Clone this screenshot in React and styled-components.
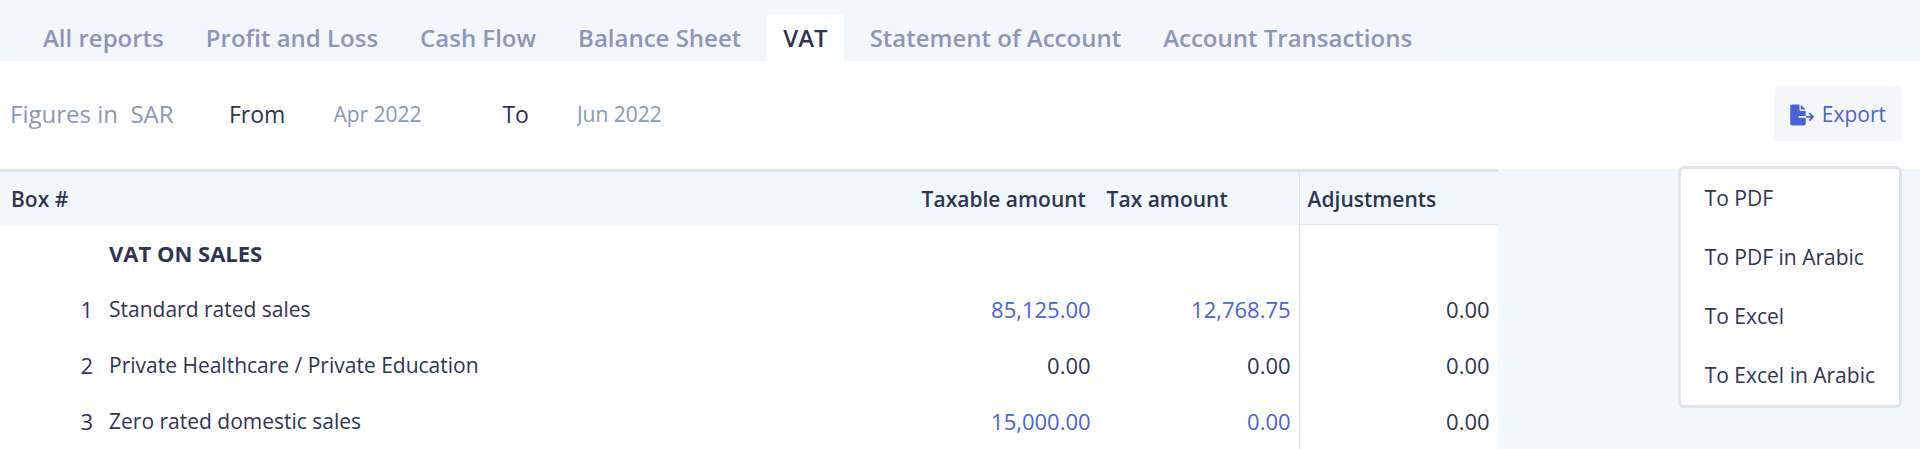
import React from 'react';
import styled, { createGlobalStyle } from 'styled-components';

const GlobalStyle = createGlobalStyle`
  :root {
    --text-color: #2f3453;
    --muted-color: #8a97b8;
    --link-color: #4a62d8;
    --page-color: #f1f8fb;
    --tab-color: #f3f6fa;
    --border-color: #dce5e9;
  }
  * {
    box-sizing: border-box;
  }
  body {
    margin: 0;
    background-color: var(--page-color);
    color: var(--text-color);
    font-family: 'Open Sans', 'Noto Sans', sans-serif;
    font-size: 21px;
    line-height: 28px;
  }
`;

// tabs
const TabNav = styled.nav`
  display: flex;
  gap: 10px;
  padding: 14px 27px 0;
`;

const Tab = styled.a`
  padding: 10px 16px 9px;
  border-radius: 4px 4px 0 0;
  background-color: ${({ $active }) => ($active ? '#ffffff' : 'var(--tab-color)')};
  color: ${({ $active }) => ($active ? 'var(--text-color)' : 'var(--muted-color)')};
  font-size: 24px;
  font-weight: 600;
  line-height: 28px;
  text-decoration: none;
  white-space: nowrap;
`;

// toolbar
const Toolbar = styled.section`
  display: flex;
  justify-content: space-between;
  align-items: center;
  padding: 25px 18px 28px 10px;
  background-color: #ffffff;
`;

const Filters = styled.div`
  display: flex;
  align-items: center;
`;

const Figures = styled.span`
  width: 219px;
  color: var(--muted-color);
  font-size: 24px;
  white-space: pre;
`;

const Period = styled.label`
  display: flex;
  align-items: center;
  gap: 48px;
  font-size: 23px;
`;

const PeriodInput = styled.input`
  width: 169px;
  padding: 0;
  border: none;
  background: transparent;
  color: var(--muted-color);
  font-family: inherit;
  font-size: 21px;
  line-height: 28px;
`;

const ExportWrap = styled.div`
  position: relative;
`;

const ExportButton = styled.button`
  display: flex;
  align-items: center;
  gap: 8px;
  padding: 15px 16px 13px;
  border: none;
  border-radius: 5px;
  background-color: #f4f6fa;
  color: var(--link-color);
  font-family: inherit;
  font-size: 21px;
  line-height: 27px;
  cursor: pointer;
`;

const Menu = styled.ul`
  position: absolute;
  top: calc(100% + 25px);
  right: 0;
  margin: 0;
  padding: 0;
  border: 3px solid #dfe3ea;
  border-radius: 6px;
  background-color: #ffffff;
  list-style: none;
  z-index: 10;
`;

const MenuItem = styled.button`
  display: block;
  width: 100%;
  padding: 15px 24px 16px;
  border: none;
  background: transparent;
  color: var(--text-color);
  font-family: inherit;
  font-size: 21px;
  line-height: 28px;
  text-align: left;
  white-space: nowrap;
  cursor: pointer;
`;

// table
const Table = styled.table`
  width: 78%;
  border-spacing: 0;
  table-layout: fixed;
  background-color: #ffffff;
`;

const Col = styled.col`
  width: ${({ $width }) => $width};
`;

const HeadCell = styled.th`
  padding: 13px 8px 11px;
  border-top: 3px solid var(--border-color);
  border-left: ${({ $last }) => ($last ? '1px solid var(--border-color)' : 'none')};
  border-bottom: 1px solid ${({ $last }) => ($last ? 'var(--border-color)' : 'transparent')};
  background-color: var(--page-color);
  font-weight: 600;
  text-align: left;
  white-space: nowrap;
  &:first-child {
    padding-left: 11px;
  }
`;

const Cell = styled.td`
  height: 56px;
  padding: 0 8px;
  border-left: ${({ $last }) => ($last ? '1px solid var(--border-color)' : 'none')};
  font-size: ${({ $number }) => ($number ? '22px' : '21px')};
  text-align: ${({ $number }) => ($number ? 'right' : 'left')};
  white-space: nowrap;
`;

const SectionCell = styled(Cell)`
  font-size: 22px;
  font-weight: 700;
`;

const Amount = styled.a`
  color: var(--link-color);
  text-decoration: none;
`;

const tabs = [
  'All reports',
  'Profit and Loss',
  'Cash Flow',
  'Balance Sheet',
  'VAT',
  'Statement of Account',
  'Account Transactions',
];

const exportOptions = ['To PDF', 'To PDF in Arabic', 'To Excel', 'To Excel in Arabic'];

const rows = [
  { box: 1, name: 'Standard rated sales', taxable: '85,125.00', tax: '12,768.75', linked: true },
  { box: 2, name: 'Private Healthcare / Private Education', taxable: '0.00', tax: '0.00' },
  { box: 3, name: 'Zero rated domestic sales', taxable: '15,000.00', tax: '0.00', linked: true },
];

const ExportIcon = () => (
  <svg width="24" height="22" viewBox="0 0 24 22" aria-hidden="true">
    <path
      d="M2.2 0.5h7.3v5.2c0 .7.5 1.2 1.2 1.2h5v5.2H8.6v1.6h7.1v5.7c0 1.2-.8 2-2 2H2.2c-1.2 0-2-.8-2-2V2.5c0-1.2.8-2 2-2z"
      fill="currentColor"
    />
    <path d="M10.8 0.7l4.8 4.8h-4.8z" fill="currentColor" />
    <path
      d="M16 12.9h6.6M19.3 9.2l3.7 3.7-3.7 3.7"
      fill="none"
      stroke="currentColor"
      strokeWidth="1.9"
    />
  </svg>
);

const Value = ({ linked, children }) =>
  linked ? <Amount href="#">{children}</Amount> : children;

export default function App() {
  return (
    <>
      <GlobalStyle />
      <TabNav>
        {tabs.map((tab) => (
          <Tab key={tab} href="#" $active={tab === 'VAT'}>
            {tab}
          </Tab>
        ))}
      </TabNav>

      <Toolbar>
        <Filters>
          <Figures>{'Figures in  SAR'}</Figures>
          <Period>
            From
            <PeriodInput defaultValue="Apr 2022" />
          </Period>
          <Period>
            To
            <PeriodInput defaultValue="Jun 2022" />
          </Period>
        </Filters>
        <ExportWrap>
          <ExportButton type="button">
            <ExportIcon />
            Export
          </ExportButton>
          <Menu>
            {exportOptions.map((option) => (
              <li key={option}>
                <MenuItem type="button">{option}</MenuItem>
              </li>
            ))}
          </Menu>
        </ExportWrap>
      </Toolbar>

      <Table>
        <colgroup>
          <Col $width="101px" />
          <Col />
          <Col $width="185px" />
          <Col $width="200px" />
          <Col $width="199px" />
        </colgroup>
        <thead>
          <tr>
            <HeadCell colSpan={2}>Box #</HeadCell>
            <HeadCell>Taxable amount</HeadCell>
            <HeadCell>Tax amount</HeadCell>
            <HeadCell $last>Adjustments</HeadCell>
          </tr>
        </thead>
        <tbody>
          <tr>
            <Cell />
            <SectionCell>VAT ON SALES</SectionCell>
            <Cell />
            <Cell />
            <Cell $last />
          </tr>
          {rows.map((row) => (
            <tr key={row.box}>
              <Cell $number>{row.box}</Cell>
              <Cell>{row.name}</Cell>
              <Cell $number>
                <Value linked={row.linked}>{row.taxable}</Value>
              </Cell>
              <Cell $number>
                <Value linked={row.linked}>{row.tax}</Value>
              </Cell>
              <Cell $number $last>
                0.00
              </Cell>
            </tr>
          ))}
        </tbody>
      </Table>
    </>
  );
}
